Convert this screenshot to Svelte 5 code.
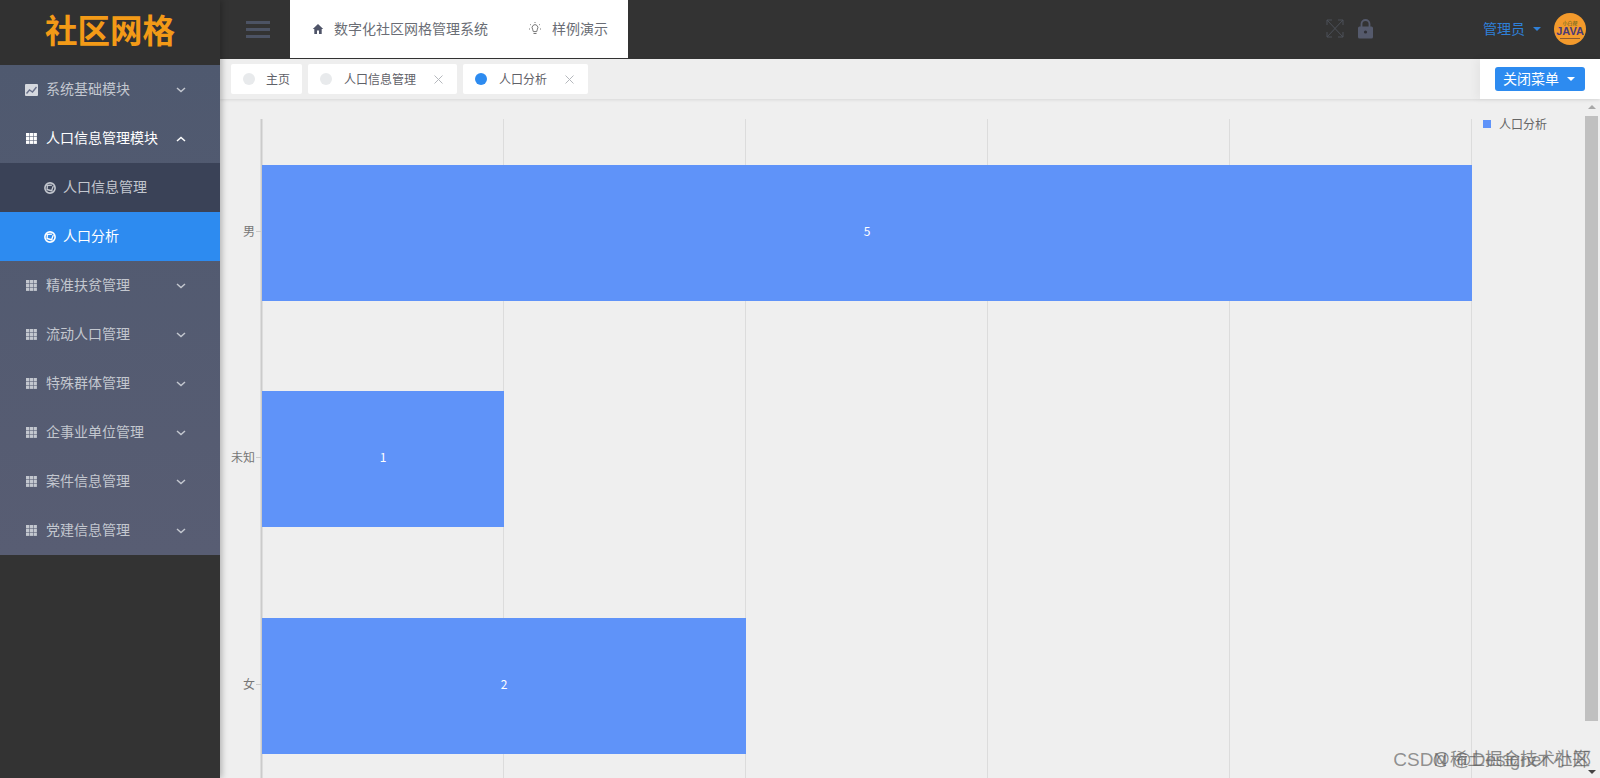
<script>
  const menus = [
    { name: "系统基础模块", icon: "chart" },
    {
      name: "人口信息管理模块",
      open: true,
      children: [{ name: "人口信息管理" }, { name: "人口分析", active: true }],
    },
    { name: "精准扶贫管理" },
    { name: "流动人口管理" },
    { name: "特殊群体管理" },
    { name: "企事业单位管理" },
    { name: "案件信息管理" },
    { name: "党建信息管理" },
  ];

  const tabs = [
    { name: "主页", closable: false },
    { name: "人口信息管理", closable: true },
    { name: "人口分析", closable: true, active: true },
  ];

  // chart data, drawn top to bottom
  const rows = [
    { label: "男", value: 5, y: 66 },
    { label: "未知", value: 1, y: 292 },
    { label: "女", value: 2, y: 519 },
  ];
  const x0 = 42;
  const unit = 242;
  const barHeight = 136;
  const ticks = [0, 1, 2, 3, 4, 5];
</script>

<div class="page">
  <aside class="sidebar">
    <div class="logo">社区网格</div>
    <ul class="menu">
      {#each menus as m}
        <li class="item" class:open={m.open}>
          {#if m.icon === "chart"}
            <svg class="ico" viewBox="0 0 13 12" width="13" height="12">
              <rect width="13" height="12" rx="1" fill="#d5d8de" />
              <path d="M1.5 9.5 4.5 6 7.5 8 11.5 3" fill="none" stroke="#69708a" stroke-width="1.4" />
            </svg>
          {:else}
            <svg class="ico" viewBox="0 0 11 11" width="11" height="11" fill="currentColor">
              {#each [0, 3.8, 7.6] as gy}
                {#each [0, 3.8, 7.6] as gx}
                  <rect x={gx} y={gy} width="3.3" height="3.3" />
                {/each}
              {/each}
            </svg>
          {/if}
          <span class="label">{m.name}</span>
          <svg class="chev" viewBox="0 0 10 6" width="10" height="6">
            <path d={m.open ? "M1 5 5 1.5 9 5" : "M1 1 5 4.5 9 1"} fill="none" stroke="currentColor" stroke-width="1.5" />
          </svg>
        </li>
        {#if m.children}
          {#each m.children as c}
            <li class="sub" class:active={c.active}>
              <svg viewBox="0 0 12 12" width="12" height="12" fill="none" stroke="currentColor">
                <circle cx="6" cy="6" r="5.1" stroke-width="1.6" />
                <path d="M2.5 3.5 8 3.2M9.3 4 7.5 9M8.5 9 3 7.5M3 8 3.5 3" stroke-width="1.3" />
              </svg>
              <span class="subtext">{c.name}</span>
            </li>
          {/each}
        {/if}
      {/each}
    </ul>
  </aside>

  <div class="main">
    <header class="topbar">
      <button class="burger" aria-label="menu"><i></i><i></i><i></i></button>
      <nav class="topnav">
        <span class="navlink">
          <svg viewBox="0 0 12 12" width="12" height="12" fill="#4f5468">
            <path d="M6 1 .8 6H2.3V11H5V7.6H7V11H9.7V6H11.2Z" />
          </svg>
          <span class="navtext">数字化社区网格管理系统</span>
        </span>
        <span class="navlink">
          <svg viewBox="0 0 14 14" width="14" height="14" fill="none" stroke="#666" stroke-width="0.9">
            <path d="M4.6 7.2a2.9 2.9 0 1 1 4.8 0L8.7 9.6H5.3ZM5.5 11.5h3M7 1V0M2.2 2.4l.8.7M11.8 2.4l-.8.7M1 7h1M12 7h1" />
          </svg>
          <span class="navtext">样例演示</span>
        </span>
      </nav>
      <div class="tools">
        <svg class="expand" viewBox="0 0 18 19" width="18" height="19" fill="none" stroke="#4c5058" stroke-width="1">
          <path d="M1 1 17 18M17 1 1 18M1 6V1H6M12 1H17V6M1 13V18H6M12 18H17V13" />
        </svg>
        <svg class="lock" viewBox="0 0 15 20" width="15" height="20">
          <path d="M3.5 8V5a4 4 0 0 1 8 0V8" fill="none" stroke="#555a6c" stroke-width="1.8" />
          <rect y="7.5" width="15" height="12" rx="1.5" fill="#555a6c" />
          <circle cx="7.5" cy="13" r="1.6" fill="#2f3036" />
        </svg>
      </div>
      <div class="user">
        <span class="username">管理员</span>
        <i class="caret"></i>
        <div class="avatar"><small>小白帮</small><b>JAVA</b><em></em></div>
      </div>
    </header>

    <div class="tabbar">
      <div class="tabs">
        {#each tabs as t}
          <div class="tab" class:active={t.active}>
            <i class="dot"></i>
            <span class="tabtext">{t.name}</span>
            {#if t.closable}
              <svg viewBox="0 0 9 9" width="9" height="9" fill="none" stroke="#b5b8bd">
                <path d="M.5.5 8.5 8.5M8.5.5 .5 8.5" />
              </svg>
            {/if}
          </div>
        {/each}
      </div>
      <div class="close-box">
        <button class="close-btn"><span class="btntext">关闭菜单</span><i class="caret white"></i></button>
      </div>
    </div>

    <section class="content">
      <svg class="chart" width="1380" height="679" viewBox="0 0 1380 679">
        {#each ticks.slice(1) as t}
          <line x1={x0 + t * unit - 0.5} x2={x0 + t * unit - 0.5} y1="20" y2="679" stroke="#dcdcdc" />
        {/each}
        <line x1={x0 - 0.5} x2={x0 - 0.5} y1="20" y2="679" stroke="#cbcbcb" stroke-width="2" />
        {#each rows as r}
          <rect x={x0} y={r.y} width={r.value * unit} height={barHeight} fill="#5f93f9" />
          <line x1={x0 - 6} x2={x0 - 1} y1={r.y + 66.5} y2={r.y + 66.5} stroke="#cbcbcb" />
          <text class="axis" x={x0 - 7} y={r.y + 71} text-anchor="end">{r.label}</text>
          <text class="val" x={x0 + (r.value * unit) / 2} y={r.y + 71} text-anchor="middle">{r.value}</text>
        {/each}
      </svg>
      <div class="legend"><i></i>人口分析</div>
      <div class="scroll">
        <i class="arrow up"></i>
        <div class="thumb"></div>
        <i class="arrow down"></i>
      </div>
    </section>
  </div>

  <div class="mark">CSDN @Designer 小郑</div>
  <div class="mark second">@稀土掘金技术社区</div>
</div>

<style>
  :global(body) {
    margin: 0;
    font-family: "Noto Sans CJK SC", "Liberation Sans", sans-serif;
  }
  .page {
    position: relative;
    display: flex;
    width: 1600px;
    height: 778px;
    overflow: hidden;
    background: #333;
  }
  .sidebar {
    width: 220px;
    flex: none;
    background: #333;
    position: relative;
    z-index: 2;
    box-shadow: 2px 0 6px rgba(0, 0, 0, 0.25);
  }
  .logo {
    height: 65px;
    box-sizing: border-box;
    padding-top: 5px;
    text-align: center;
    font-size: 32.5px;
    font-weight: 700;
    line-height: 48px;
    color: #f39a17;
    background: #313131;
  }
  .menu {
    list-style: none;
    margin: 0;
    padding: 0;
    background: linear-gradient(#4f596f, #585d73);
  }
  .item {
    display: flex;
    align-items: center;
    height: 49px;
    padding-left: 25px;
    font-size: 14px;
    color: #c3c7cf;
  }
  .item.open {
    color: #fff;
  }
  .ico {
    width: 13px;
    margin-right: 8px;
  }
  .label {
    flex: 1;
    padding-bottom: 4px;
  }
  .chev {
    margin-right: 34px;
  }
  .sub {
    display: flex;
    align-items: center;
    gap: 7px;
    height: 49px;
    padding-left: 44px;
    font-size: 14px;
    color: #c3c7cf;
    background: #3a4257;
  }
  .subtext {
    padding-bottom: 4px;
  }
  .sub.active {
    color: #fff;
    background: #2d8bf0;
  }
  .main {
    flex: 1;
    min-width: 0;
    display: flex;
    flex-direction: column;
  }
  .topbar {
    display: flex;
    align-items: flex-start;
    height: 59px;
    flex: none;
    background: #333;
  }
  .burger {
    display: flex;
    flex-direction: column;
    gap: 4px;
    width: 24px;
    margin: 21px 0 0 26px;
    padding: 0;
    border: 0;
    background: none;
  }
  .burger i {
    height: 3px;
    background: #4c5364;
  }
  .topnav {
    display: flex;
    gap: 40px;
    height: 58px;
    margin-left: 20px;
    padding: 0 20px 0 22px;
    box-sizing: border-box;
    width: 338px;
    background: #fff;
    white-space: nowrap;
  }
  .navlink {
    display: flex;
    align-items: center;
    gap: 10px;
    font-size: 14px;
    color: #6a6d75;
  }
  .navtext {
    padding-bottom: 2px;
  }
  .tools {
    display: flex;
    gap: 14px;
    margin: 19px 0 0 698px;
  }
  .user {
    display: flex;
    align-items: center;
    margin-left: 110px;
    height: 58px;
    font-size: 14px;
    color: #2f80d8;
  }
  .username {
    padding-bottom: 2px;
  }
  .caret {
    width: 0;
    height: 0;
    margin-left: 8px;
    border: 4px solid transparent;
    border-top: 4px solid #2f80d8;
    border-bottom: 0;
  }
  .caret.white {
    border-top-color: #fff;
    margin-left: 8px;
  }
  .avatar {
    display: flex;
    flex-direction: column;
    align-items: center;
    justify-content: center;
    width: 32px;
    height: 32px;
    margin-left: 13px;
    border-radius: 50%;
    background: #f39a2c;
    color: #4a3a78;
    overflow: hidden;
  }
  .avatar small {
    font-size: 5px;
    line-height: 6px;
    color: #4e5a1e;
  }
  .avatar b {
    font: bold 11px/11px "Liberation Sans", sans-serif;
  }
  .avatar em {
    width: 20px;
    height: 1px;
    margin-top: 1px;
    background: #8a5a30;
  }
  .tabbar {
    display: flex;
    height: 40px;
    flex: none;
    background: #eeeeee;
    box-shadow: 0 1px 3px rgba(0, 0, 0, 0.1);
    position: relative;
    z-index: 1;
  }
  .tabs {
    flex: 1;
    display: flex;
    gap: 6px;
    padding: 5px 0 0 11px;
  }
  .tab {
    display: flex;
    align-items: center;
    height: 30px;
    padding: 0 12px;
    background: #fff;
    border-radius: 2px;
    font-size: 12px;
    color: #5f6168;
  }
  .tabtext {
    padding-bottom: 2px;
  }
  .tab:first-child .tabtext {
    margin-left: -1px;
  }
  .tab svg {
    margin-left: 18px;
    margin-right: 2px;
  }
  .dot {
    width: 12px;
    height: 12px;
    border-radius: 50%;
    background: #e8eaec;
    margin-right: 12px;
  }
  .tab.active .dot {
    background: #2d8bf0;
  }
  .close-box {
    width: 120px;
    background: #fff;
    padding: 8px 0 0 15px;
    box-sizing: border-box;
    box-shadow: -4px 0 8px rgba(0, 0, 0, 0.04);
  }
  .close-btn {
    display: flex;
    align-items: center;
    width: 90px;
    height: 24px;
    padding: 0 0 0 8px;
    border: 0;
    border-radius: 3px;
    background: #2d8bf0;
    color: #fff;
    font: inherit;
    font-size: 14px;
  }
  .btntext {
    padding-bottom: 2px;
  }
  .content {
    position: relative;
    flex: 1;
    background: #efefef;
    overflow: hidden;
  }
  .chart {
    display: block;
  }
  .axis {
    font-size: 12px;
    fill: #777;
  }
  .val {
    font-size: 12px;
    fill: #fff;
  }
  .legend {
    position: absolute;
    left: 1263px;
    top: 19px;
    display: flex;
    align-items: center;
    font-size: 12px;
    line-height: 12px;
    color: #666;
  }
  .legend i {
    width: 8px;
    height: 8px;
    margin-right: 8px;
    background: #5f93f9;
  }
  .scroll {
    position: absolute;
    right: 2px;
    top: 0;
    bottom: 0;
    width: 13px;
    display: flex;
    flex-direction: column;
    align-items: center;
  }
  .thumb {
    width: 13px;
    height: 605px;
    margin-top: 7px;
    background: #c0c0c0;
  }
  .arrow {
    width: 0;
    height: 0;
    border: 4px solid transparent;
  }
  .arrow.up {
    margin-top: 6px;
    border-top: 0;
    border-bottom: 4px solid #a8a8a8;
  }
  .arrow.down {
    margin-top: 49px;
    border-bottom: 0;
    border-top: 4px solid #444;
  }
  .mark {
    position: absolute;
    right: 9px;
    bottom: 6px;
    z-index: 3;
    font-size: 19px;
    line-height: 24px;
    font-family: "Liberation Sans", "Noto Sans CJK SC", sans-serif;
    color: rgba(90, 90, 90, 0.65);
    white-space: nowrap;
  }
  .mark.second {
    right: 10px;
    bottom: 7px;
    font-size: 17.5px;
    color: rgba(90, 90, 90, 0.7);
  }
</style>
